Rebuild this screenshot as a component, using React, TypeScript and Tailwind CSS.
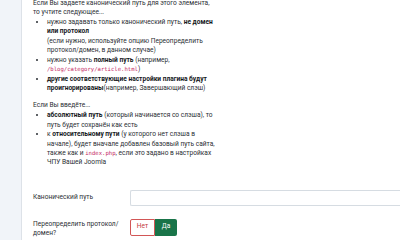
import React from 'react';

const Code: React.FC<{ children: React.ReactNode }> = ({ children }) => (
  <code className="font-['DejaVu_Sans_Mono',monospace] text-[5.6px] text-[#c4275f]">{children}</code>
);

export default function App() {
  return (
    <div className="w-[400px] h-[240px] overflow-hidden flex bg-white font-['Roboto',sans-serif] text-[6.6px] leading-[9.3px] text-[#2a2e33]">
      {/* sidebar strip */}
      <div className="w-[22px] shrink-0 bg-[#f1f4f9] border-r border-[#dde2e8]" />

      <div className="flex-1 pl-[11px] -mt-[1px]">
        <div>
          <p>
            Если Вы задаете канонический путь для этого элемента,
            <br />
            то учтите следующее...
          </p>
          <ul className="list-disc pl-[14px] mt-[0.5px]">
            <li>
              нужно задавать только канонический путь, <b className="text-[#15181b]">не домен</b>
              <br />
              <b className="text-[#15181b]">или протокол</b>
              <br />
              (если нужно, используйте опцию Переопределить
              <br />
              протокол/домен, в данном случае)
            </li>
            <li className="mt-[0.5px]">
              нужно указать <b className="text-[#15181b]">полный путь</b> (например,
              <br />
              <Code>/blog/category/article.html</Code>)
            </li>
            <li className="mt-[0.5px]">
              <b className="text-[#15181b]">другие соответствующие настройки плагина будут</b>
              <br />
              <b className="text-[#15181b]">проигнорированы</b>(например, Завершающий слэш)
            </li>
          </ul>
          <p className="mt-[7.5px]">Если Вы введёте...</p>
          <ul className="list-disc pl-[14px] mt-[1px]">
            <li>
              <b className="text-[#15181b]">абсолютный путь</b> (который начинается со слэша), то
              <br />
              путь будет сохранён как есть
            </li>
            <li className="mt-[0.5px]">
              к <b className="text-[#15181b]">относительному пути</b> (у которого нет слэша в
              <br />
              начале), будет вначале добавлен базовый путь сайта,
              <br />
              также как и <Code>index.php</Code>, если это задано в настройках
              <br />
              ЧПУ Вашей Joomla
            </li>
          </ul>
        </div>

        {/* form rows */}
        <div className="mt-[22px] flex items-center">
          <label className="w-[97px] shrink-0">Канонический путь</label>
          <div className="flex-1 h-[16px] border border-[#d6dce2] rounded-l-[2px] border-r-0 bg-white" />
        </div>

        <div className="mt-[13px] flex items-start">
          <label className="w-[97px] shrink-0 pt-[1.5px]">
            Переопределить протокол/
            <br />
            домен?
          </label>
          <div className="flex">
            <button className="w-[25px] h-[17px] border border-[#d25656] text-[#c43a3a] rounded-l-[2px] bg-white flex items-center justify-center">
              Нет
            </button>
            <button className="w-[22px] h-[17px] bg-[#197449] text-white rounded-r-[2px] flex items-center justify-center">
              Да
            </button>
          </div>
        </div>
      </div>
    </div>
  );
}
